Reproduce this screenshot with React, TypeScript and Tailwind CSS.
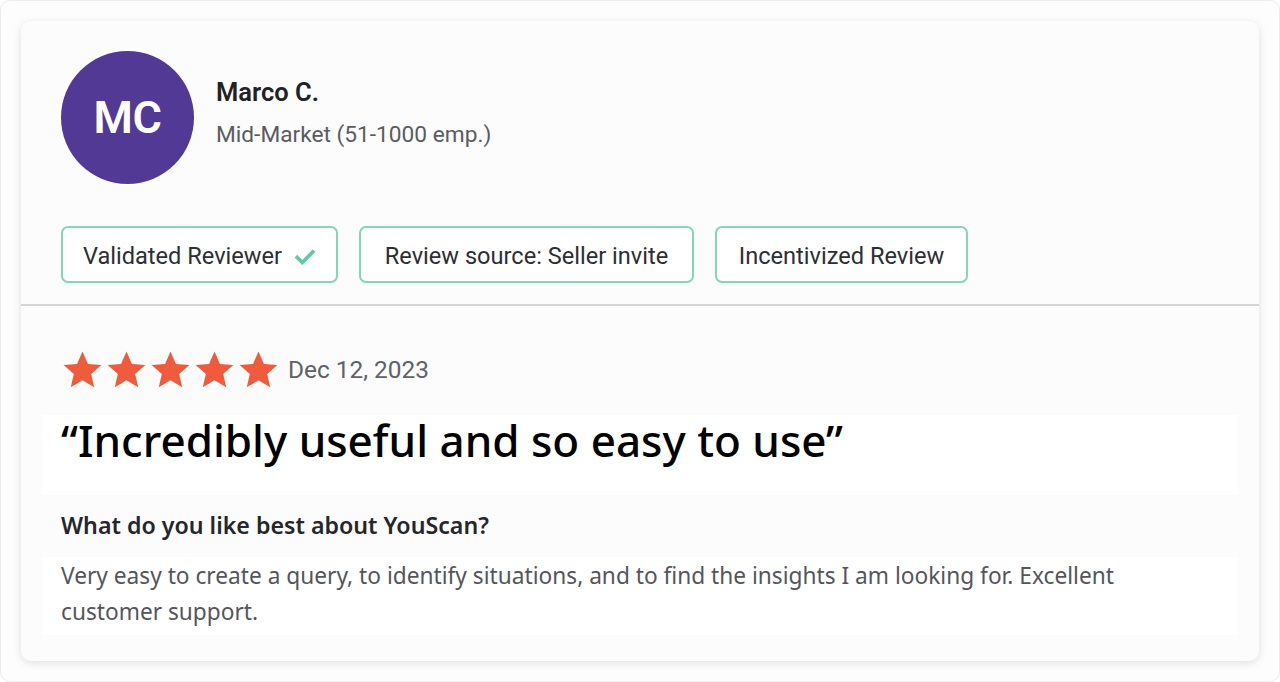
import React from "react";

const barlow = "font-['Roboto','Liberation_Sans',sans-serif]";
const fira = "font-['Noto_Sans','Open_Sans',sans-serif]";

function Star() {
  return (
    <svg viewBox="0 0 24 24" className="h-[42px] w-[43px]" fill="#ef5b3c">
      <path d="M12 1.4l3.1 7.1 7.7.7-5.85 5.05 1.75 7.55L12 17.85l-6.7 3.95 1.75-7.55L1.2 9.2l7.7-.7z" />
    </svg>
  );
}

function Badge({ children, className }: { children: React.ReactNode; className: string }) {
  return (
    <div
      className={`flex h-[57px] items-center justify-center gap-[12px] rounded-[7px] border-2 border-[#85d6b8] bg-white pt-[5px] text-[23.6px] text-[#2e2e33] ${barlow} ${className}`}
    >
      {children}
    </div>
  );
}

export default function App() {
  return (
    <div className="h-[682px] w-[1280px] bg-white">
      <div className="flex h-full w-full flex-col rounded-[10px] border border-[#ececec] bg-[#fdfdfd] p-[20px]">
        <div className="flex flex-1 flex-col rounded-[10px] bg-[#fcfcfc] shadow-[0_2px_8px_rgba(0,0,0,0.12)]">
          <div className="px-[40px] pt-[30px] pb-[21px]">
            <div className="flex items-start gap-[22px]">
              <div
                className={`flex h-[133px] w-[133px] items-center justify-center rounded-full bg-[#533996] text-[45px] font-semibold tracking-[-0.5px] text-white ${barlow}`}
              >
                MC
              </div>
              <div className={`flex flex-col pt-[26px] ${barlow}`}>
                <div className="text-[25.5px] leading-[30px] font-semibold text-[#222226]">
                  Marco C.
                </div>
                <div className="mt-[13px] text-[22.7px] leading-[30px] text-[#5b5b60]">
                  Mid-Market (51-1000 emp.)
                </div>
              </div>
            </div>
            <div className="mt-[42px] flex gap-[21px]">
              <Badge className="w-[277px]">
                Validated Reviewer
                <svg viewBox="0 0 24 24" className="h-[22px] w-[22px]" fill="none">
                  <path
                    d="M3.5 12.5l5.5 5.5L20.5 6.5"
                    stroke="#5ccda1"
                    strokeWidth="4"
                    strokeLinecap="square"
                  />
                </svg>
              </Badge>
              <Badge className="w-[335px]">Review source: Seller invite</Badge>
              <Badge className="w-[253px]">Incentivized Review</Badge>
            </div>
          </div>
          <div className="h-[2px] bg-[#d6d6d6]" />
          <div className="px-[40px] pt-[43px]">
            <div className="flex items-center gap-[8px]">
              <div className="flex items-center gap-[1px]">
                <Star />
                <Star />
                <Star />
                <Star />
                <Star />
              </div>
              <span className={`text-[24.4px] text-[#616167] ${barlow}`}>
                Dec 12, 2023
              </span>
            </div>
            <div className="-mx-[19px] mt-[24px] flex h-[80px] items-start bg-white px-[19px]">
              <h1
                className={`text-[44px] leading-[50px] font-medium text-black ${fira}`}
              >
                “Incredibly useful and so easy to use”
              </h1>
            </div>
            <div
              className={`mt-[15px] text-[23.2px] leading-[30px] font-semibold text-[#26262b] ${fira}`}
            >
              What do you like best about YouScan?
            </div>
            <div className="-mx-[19px] mt-[17px] bg-white px-[19px] pt-[1px] pb-[5px]">
              <p
                className={`text-[22.7px] leading-[36px] text-[#55555b] ${fira}`}
              >
                Very easy to create a query, to identify situations, and to find
                the insights I am looking for. Excellent customer support.
              </p>
            </div>
          </div>
        </div>
      </div>
    </div>
  );
}
